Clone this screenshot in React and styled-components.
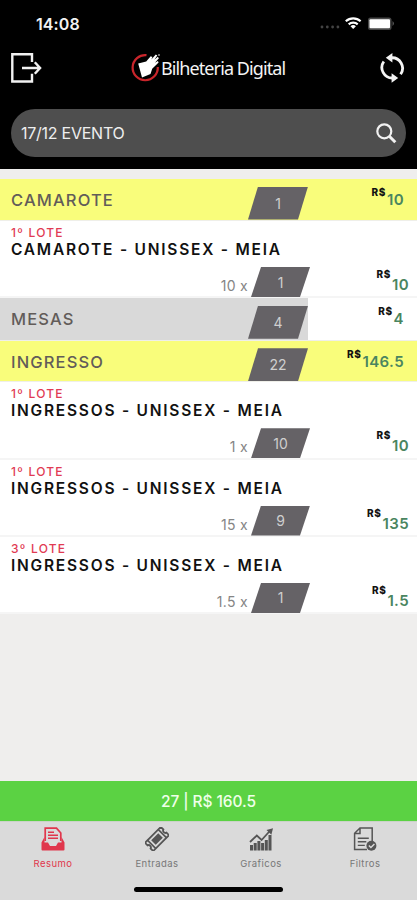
import React from "react";
import styled, { createGlobalStyle } from "styled-components";

const GlobalStyle = createGlobalStyle`
  * {
    box-sizing: border-box;
  }

  body {
    margin: 0;
    background: #efeeec;
    font-family: Inter, "Liberation Sans", sans-serif;
  }
`;

const Screen = styled.div`
  width: 417px;
  height: 900px;
  display: flex;
  flex-direction: column;
  background: #efeeed;
  overflow: hidden;
`;

const Header = styled.header`
  height: 169px;
  flex: none;
  background: #000;
  color: #fff;
`;

const StatusBar = styled.div`
  height: 46px;
  padding: 0 21px 0 36px;
  display: flex;
  align-items: center;
  justify-content: space-between;
`;

const Clock = styled.span`
  font-size: 16px;
  font-weight: 600;
  line-height: 20px;
  letter-spacing: 0.1px;
  color: #f2f2f2;
  padding-top: 1px;
`;

const Nav = styled.div`
  height: 43px;
  padding: 0 12px 0 11px;
  display: flex;
  align-items: center;
  justify-content: space-between;
`;

const Brand = styled.div`
  display: flex;
  align-items: center;
  margin-right: 3px;
`;

const BrandName = styled.span`
  width: 126px;
  font-family: "Noto Sans", sans-serif;
  font-size: 18px;
  line-height: 24px;
  letter-spacing: -0.9px;
  white-space: nowrap;
  color: #f4f4f4;
`;

const Search = styled.div`
  height: 48px;
  margin: 20px 11px 0;
  padding: 0 9px 0 10px;
  display: flex;
  align-items: center;
  justify-content: space-between;
  border-radius: 24px;
  background: #4e4e4e;
  color: #eee;
  font-size: 16px;
  letter-spacing: -0.25px;
`;

const List = styled.main`
  flex: 1;
  padding-top: 10px;
`;

const Group = styled.div`
  height: ${(p) => p.$height}px;
  display: grid;
  grid-template-columns: 248px 60px 1fr;
  background: ${(p) =>
    p.$muted ? "linear-gradient(90deg, #d9d9d9 308px, #fff 308px)" : "#f9fd7b"};
  border-bottom: 1px solid #efefe9;
`;

const GroupName = styled.span`
  padding: 10px 0 0 11px;
  font-size: 16.5px;
  line-height: 22px;
  font-weight: 500;
  letter-spacing: 1.15px;
  color: #625c59;
`;

const Ticket = styled.div`
  height: 77.3px;
  padding-top: 5px;
  background: #fff;
  border-bottom: 2px solid #f5f5f5;
`;

const Lot = styled.div`
  padding-left: 11px;
  font-size: 12px;
  line-height: 14px;
  font-weight: 500;
  letter-spacing: 1.25px;
  color: #e13b53;
`;

const TicketName = styled.div`
  padding-left: 11px;
  font-size: 15.5px;
  line-height: 20px;
  font-weight: 600;
  letter-spacing: 1.77px;
  white-space: nowrap;
  color: #111;
`;

const TicketRow = styled.div`
  margin-top: 7px;
  height: 30px;
  display: grid;
  grid-template-columns: 251px 59px 1fr;
`;

const UnitPrice = styled.span`
  padding: 9px 3px 0 0;
  text-align: right;
  font-size: 14px;
  line-height: 20px;
  letter-spacing: 0.3px;
  color: #858585;
`;

const Badge = styled.span`
  height: ${(p) => p.$height}px;
  margin-top: ${(p) => p.$top || 0}px;
  display: flex;
  align-items: center;
  justify-content: center;
  clip-path: polygon(10px 0, 100% 0, calc(100% - 10px) 100%, 0 100%);
  background: #656266;
  color: #cfcfcf;
  font-size: 14px;
`;

const Price = styled.div`
  display: flex;
  justify-content: flex-end;
  gap: 1px;
  padding: ${(p) => (p.$group ? "7px 13px 0 0" : "1px 8px 0 0")};
`;

const Currency = styled.span`
  font-size: 10px;
  line-height: 12px;
  font-weight: 800;
  letter-spacing: 0.6px;
  color: #111;
`;

const Amount = styled.span`
  padding-top: ${(p) => (p.$group ? 4 : 7)}px;
  font-size: 15px;
  line-height: 20px;
  font-weight: 600;
  letter-spacing: 0.4px;
  color: #4a8560;
`;

const Total = styled.div`
  height: 40px;
  flex: none;
  display: flex;
  align-items: center;
  justify-content: center;
  background: #5bd243;
  color: #efffe9;
  font-size: 15.5px;
  font-weight: 500;
  letter-spacing: -0.1px;
`;

const TabBar = styled.nav`
  height: 79px;
  flex: none;
  display: flex;
  flex-direction: column;
  align-items: center;
  background: #dadada;
  border-top: 1px solid #cbd3c8;
`;

const Tabs = styled.div`
  width: 100%;
  height: 65px;
  padding: 5px 0 0 1px;
  display: grid;
  grid-template-columns: repeat(4, 104px);
`;

const Tab = styled.div`
  display: flex;
  flex-direction: column;
  align-items: center;
  gap: 7px;
  font-size: 9.5px;
  line-height: 12px;
  letter-spacing: 0.45px;
  color: ${(p) => (p.$active ? "#e0364c" : "#777")};

  svg {
    color: ${(p) => (p.$active ? "#e0364c" : "#555")};
  }
`;

const HomeIndicator = styled.div`
  width: 149px;
  height: 5px;
  border-radius: 3px;
  background: #000;
`;

const StatusIcons = () => (
  <svg width="76" height="20" viewBox="0 0 76 20">
    <g fill="#444">
      <circle cx="2" cy="14" r="1.4" />
      <circle cx="7.3" cy="14" r="1.4" />
      <circle cx="12.6" cy="14" r="1.4" />
      <circle cx="17.9" cy="14" r="1.4" />
    </g>
    <g fill="none" stroke="#fff" strokeWidth="2.2">
      <path d="M25.8 8.2a11 11 0 0 1 14.8 0" />
      <path d="M28.7 11.4a6.7 6.7 0 0 1 9 0" />
    </g>
    <path d="M30.5 13.3a4 4 0 0 1 5.4 0l-2.7 2.7z" fill="#fff" />
    <rect x="48" y="4.5" width="23.5" height="12.5" rx="2.5" fill="#484848" />
    <rect x="49.5" y="6.3" width="20.5" height="9" rx="1" fill="#fff" />
    <path d="M72.5 8q3 2.5 0 5z" fill="#555" />
  </svg>
);

const ExitIcon = () => (
  <svg width="31" height="30" viewBox="0 0 31 30" fill="none" stroke="#f2f2f2" strokeWidth="2.4">
    <path d="M21 9V1.3H1.3v27.2H21v-7.7" />
    <path d="M11 15h17.5M23.8 9.2l5.3 5.8-5.3 5.8" />
  </svg>
);

const BrandIcon = () => (
  <svg width="30" height="30" viewBox="0 0 30 30">
    <path d="M15.5 2.1A12.6 12.6 0 1 0 26.8 14" fill="none" stroke="#c9252b" strokeWidth="2.2" />
    <path d="M7.2 10.4l8-2 4.5-5.2 1.7.8-1.1 2.6 4.5-5 1.5 1-3 4.2 3.5-3.1 1.1 1.5-4 4.5 3-1.8.7 1.5-6.4 6.4-1.7 5.2-8.5 3.4z" fill="#fff" />
    <circle cx="28" cy="2" r=".8" fill="#fff" />
  </svg>
);

const SyncIcon = () => (
  <svg width="26" height="30" viewBox="0 0 26 30">
    <g fill="none" stroke="#f4f4f4" strokeWidth="2.8">
      <path d="M4.8 8.5A10.5 10.5 0 0 0 14 25" />
      <path d="M12 4.8a10.5 10.5 0 0 1 9.6 16.5" />
    </g>
    <path d="M13.4 0v9.6L6.8 4.8zM12.6 20.2v9.6l6.6-4.8z" fill="#f4f4f4" />
  </svg>
);

const SearchIcon = () => (
  <svg width="22" height="22" viewBox="0 0 22 22" fill="none" stroke="#f1f1f1">
    <circle cx="9.3" cy="9.3" r="7" strokeWidth="2.2" />
    <path d="M14.3 14.3l6 6" strokeWidth="3" />
  </svg>
);

const InboxIcon = () => (
  <svg width="24" height="24" viewBox="0 0 24 24">
    <path d="M4.2 14V1.2h11.3L19.8 6v8" fill="none" stroke="currentColor" strokeWidth="1.7" />
    <path d="M7 5.2h6M7 8.2h10M7 11.2h10" stroke="currentColor" strokeWidth="1.5" />
    <path d="M3.5 10L.5 15.5v7q0 1 1 1h21q1 0 1-1v-7L20.5 10v5.5H17l-2 3.5H9l-2-3.5H3.5z" fill="currentColor" />
  </svg>
);

const TicketIcon = () => (
  <svg width="24" height="24" viewBox="0 0 24 24">
    <g transform="rotate(-45 12 12)">
      <path d="M.8 6.2h22.4v3.6a2.3 2.3 0 0 0 0 4.4v3.6H.8v-3.6a2.3 2.3 0 0 0 0-4.4z" fill="none" stroke="currentColor" strokeWidth="1.8" />
      <path d="M4.4 6v12M19.6 6v12" stroke="currentColor" strokeWidth="1.6" />
      <rect x="7" y="8.8" width="10" height="6.4" fill="currentColor" />
    </g>
  </svg>
);

const ChartIcon = () => (
  <svg width="24" height="24" viewBox="0 0 24 24">
    <path d="M1 18h3v5.5H1zM4.7 16h3v7.5h-3zM8.4 14h3v9.5h-3zM12.1 16h3v7.5h-3zM15.8 13h3v10.5h-3zM19.5 8h3v15.5h-3z" fill="currentColor" />
    <path d="M1 15l6.8-6.5 4.8 4.5 8.2-9" fill="none" stroke="currentColor" strokeWidth="1.8" />
    <path d="M17.5 3L24 1.2l-1.6 6.6z" fill="currentColor" />
  </svg>
);

const FilterIcon = () => (
  <svg width="24" height="24" viewBox="0 0 24 24">
    <path d="M14 22.5H1.6V6.3L7 1h12.2v13M2 6.5h5V1" fill="none" stroke="currentColor" strokeWidth="1.5" />
    <path d="M4.8 11.2h11M4.8 14.8h8.5M4.8 18.4h7" stroke="currentColor" strokeWidth="1.4" />
    <circle cx="18.4" cy="18.8" r="5" fill="currentColor" />
    <path d="M15.9 18.6l2 2 3.5-3.7" fill="none" stroke="#dadada" strokeWidth="1.4" />
  </svg>
);

const groups = [
  {
    name: "CAMAROTE",
    count: 1,
    total: "10",
    height: 42,
    tickets: [
      { lot: "1º LOTE", name: "CAMAROTE - UNISSEX - MEIA", unit: "10", count: 1, total: "10" },
    ],
  },
  { name: "MESAS", count: 4, total: "4", height: 42.4, muted: true, tickets: [] },
  {
    name: "INGRESSO",
    count: 22,
    total: "146.5",
    height: 41.6,
    tickets: [
      { lot: "1º LOTE", name: "INGRESSOS - UNISSEX - MEIA", unit: "1", count: 10, total: "10" },
      { lot: "1º LOTE", name: "INGRESSOS - UNISSEX - MEIA", unit: "15", count: 9, total: "135" },
      { lot: "3º LOTE", name: "INGRESSOS - UNISSEX - MEIA", unit: "1.5", count: 1, total: "1.5" },
    ],
  },
];

const tabs = [
  { label: "Resumo", Icon: InboxIcon, active: true },
  { label: "Entradas", Icon: TicketIcon },
  { label: "Graficos", Icon: ChartIcon },
  { label: "Filtros", Icon: FilterIcon },
];

const App = () => {
  return (
    <Screen>
      <GlobalStyle />
      <Header>
        <StatusBar>
          <Clock>14:08</Clock>
          <StatusIcons />
        </StatusBar>
        <Nav>
          <ExitIcon />
          <Brand>
            <BrandIcon />
            <BrandName>Bilheteria Digital</BrandName>
          </Brand>
          <SyncIcon />
        </Nav>
        <Search>
          <span>17/12 EVENTO</span>
          <SearchIcon />
        </Search>
      </Header>

      <List>
        {groups.map((group) => (
          <React.Fragment key={group.name}>
            <Group $height={group.height} $muted={group.muted}>
              <GroupName>{group.name}</GroupName>
              <Badge $height={33} $top={7.5}>{group.count}</Badge>
              <Price $group>
                <Currency>R$</Currency>
                <Amount $group>{group.total}</Amount>
              </Price>
            </Group>
            {group.tickets.map((ticket, i) => (
              <Ticket key={i}>
                <Lot>{ticket.lot}</Lot>
                <TicketName>{ticket.name}</TicketName>
                <TicketRow>
                  <UnitPrice>{ticket.unit} x</UnitPrice>
                  <Badge $height={30}>{ticket.count}</Badge>
                  <Price>
                    <Currency>R$</Currency>
                    <Amount>{ticket.total}</Amount>
                  </Price>
                </TicketRow>
              </Ticket>
            ))}
          </React.Fragment>
        ))}
      </List>

      <Total>27 | R$ 160.5</Total>
      <TabBar>
        <Tabs>
          {tabs.map(({ label, Icon, active }) => (
            <Tab key={label} $active={active}>
              <Icon />
              {label}
            </Tab>
          ))}
        </Tabs>
        <HomeIndicator />
      </TabBar>
    </Screen>
  );
};

export default App;
